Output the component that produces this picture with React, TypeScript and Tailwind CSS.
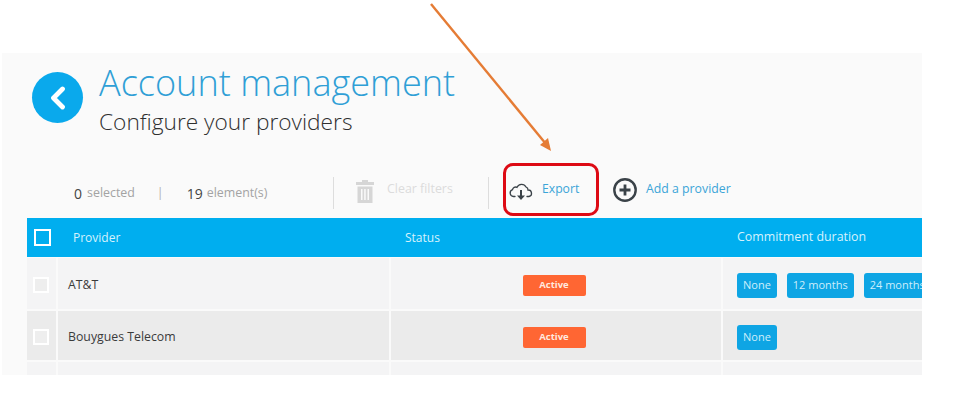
import React from "react";

const font = { fontFamily: '"Open Sans", "Noto Sans", sans-serif' };

function Row({ name, tone, durations, top, empty }: { name: string; tone: string; durations: string[]; top: string; empty?: boolean }) {
  return (
    <div className={`flex shrink-0 gap-[2px] ${top}`}>
      <div className={`w-[29px] shrink-0 flex items-center justify-center pt-[3px] ${tone}`}>
        {!empty && <span className="block w-[16px] h-[16px] border-2 border-white bg-[#eeeeee] -ml-[1px]" />}
      </div>
      <div className={`w-[331px] shrink-0 flex items-center pl-[10px] pt-[3px] text-[12.3px] text-[#3b3b3b] ${tone}`}>{name}</div>
      <div className={`w-[330px] shrink-0 flex items-center justify-center pr-[4px] pt-[3px] ${tone}`}>
        {!empty && <span className="w-[63px] h-[21px] rounded-[2px] bg-[#ff6633] text-[#ffe9df] text-[9.5px] font-bold flex items-center justify-center">Active</span>}
      </div>
      <div className={`flex-1 min-w-0 overflow-hidden flex items-center gap-[10px] pl-[14px] pt-[3px] ${tone}`}>
        {durations.map((d) => (
          <span key={d} className="shrink-0 h-[25px] px-[6px] rounded-[3px] bg-[#0ea5e4] text-[#cdeefb] text-[11px] flex items-center whitespace-nowrap">{d}</span>
        ))}
      </div>
    </div>
  );
}

export default function App() {
  return (
    <div className="relative w-[954px] h-[400px] bg-white overflow-hidden" style={font}>
      <div className="ml-[2px] w-[920px] pt-[53px]">
        <div className="h-[322px] bg-[#fafafa] overflow-hidden flex flex-col pl-[25px]">
          {/* header */}
          <div className="h-[116px] shrink-0 flex items-start pt-[19px] pl-[5px]">
            <div className="w-[51px] h-[51px] rounded-full bg-[#0aa9ec] flex items-center justify-center">
              <svg width="20" height="24" viewBox="0 0 20 24" fill="none">
                <path d="M14.5 3 L5.5 12 L14.5 21" stroke="white" strokeWidth="4.8" strokeLinecap="round" strokeLinejoin="round" />
              </svg>
            </div>
            <div className="ml-[16px] -mt-[14px]">
              <div className="text-[36.1px] font-light leading-[49px] text-[#2f9fd6] whitespace-nowrap">Account management</div>
              <div className="text-[22.7px] font-light leading-[30px] text-[#2f2f2f] whitespace-nowrap">Configure your providers</div>
            </div>
          </div>
          {/* toolbar */}
          <div className="h-[49px] shrink-0 flex items-center -mt-[1px] mb-[1px]">
            <div className="w-[306px] shrink-0 flex items-center pl-[47px] pt-[1px] text-[12.4px] text-[#a3a3a3] whitespace-nowrap">
              <span className="text-[#444] text-[14px]">0</span>
              <span className="ml-[5px]">selected</span>
              <span className="ml-[22px] text-[#b0b0b0]">|</span>
              <span className="ml-[23px] text-[#444] text-[14px]">19</span>
              <span className="ml-[4px]">element(s)</span>
            </div>
            <div className="w-px h-[32px] bg-[#dddddd] shrink-0" />
            <div className="w-[154px] shrink-0 flex items-center pl-[22px] -mt-[3px]">
              <svg width="20" height="25" viewBox="0 0 20 25" fill="#d6d6d6" className="-ml-[1px]">
                <path d="M7 1h6v2h6v3H1V3h6z" />
                <path fillRule="evenodd" d="M2.5 7.5h15V24h-15z M6 10v11h1.5V10z M9.2 10v11h1.5V10z M12.5 10v11H14V10z" />
              </svg>
              <span className="ml-[12px] text-[12.4px] text-[#dcdcdc] -mt-[4px] whitespace-nowrap">Clear filters</span>
            </div>
            <div className="w-px h-[32px] bg-[#dddddd] shrink-0" />
            <div className="w-[125px] shrink-0 flex items-center pl-[21px] -mt-[6px]">
              <svg width="25" height="19" viewBox="0 0 25 19" fill="none" className="mt-[4px] -ml-[1px]">
                <path d="M6 14.5H4.5A3.5 3.5 0 0 1 3.5 7.7A3.2 3.2 0 0 1 8 5.3A5 5 0 0 1 17 5A3 3 0 0 1 19 8A3.3 3.3 0 0 1 20 14.5H18" stroke="#3a4248" strokeWidth="1.3" strokeLinecap="round" />
                <path d="M12 8v7" stroke="#3a4248" strokeWidth="2" />
                <path d="M8 13.5h8l-4 4.5z" fill="#3a4248" />
              </svg>
              <span className="ml-[8px] text-[12.2px] text-[#3ba5d8]">Export</span>
            </div>
            <div className="flex items-center -ml-[2px] -mt-[6px]">
              <svg width="26" height="26" viewBox="0 0 26 26" fill="none">
                <circle cx="13" cy="13" r="10.7" stroke="#3a4248" strokeWidth="2.4" />
                <path d="M13 7.5v11M7.5 13h11" stroke="#3a4248" strokeWidth="2.8" />
              </svg>
              <span className="ml-[8px] text-[12.3px] text-[#3ba5d8] whitespace-nowrap">Add a provider</span>
            </div>
          </div>
          {/* table */}
          <div className="h-[39px] shrink-0 bg-[#00aeef] flex items-center text-[12px] text-[#d6f2fd]">
            <div className="w-[46px] shrink-0 pl-[7px]">
              <span className="block w-[17px] h-[17px] border-2 border-white" />
            </div>
            <div className="w-[332px] shrink-0 font-medium">Provider</div>
            <div className="w-[332px] shrink-0 font-medium">Status</div>
            <div className="font-medium text-[12.4px]">Commitment duration</div>
          </div>
          <Row name="AT&T" tone="bg-[#f4f4f5]" durations={["None", "12 months", "24 months"]} top="h-[51px] mt-[1px]" />
          <Row name="Bouygues Telecom" tone="bg-[#ebebeb]" durations={["None"]} top="h-[49px] mt-[2px]" />
          <Row name="" tone="bg-[#f4f4f5]" durations={[]} top="h-[20px] mt-[2px]" empty />
        </div>
      </div>

      {/* annotation: red highlight */}
      <div className="absolute left-[503px] top-[163px] w-[96px] h-[53px] rounded-[10px] border-[3px] border-[#dd0a14]" />
      {/* annotation: arrow */}
      <svg className="absolute left-0 top-0" width="954" height="400" fill="none">
        <path d="M431 4 L546 144" stroke="#e57c35" strokeWidth="2.4" />
        <path d="M551 151 L540 145 L548 138 Z" fill="#e57c35" />
      </svg>
    </div>
  );
}
